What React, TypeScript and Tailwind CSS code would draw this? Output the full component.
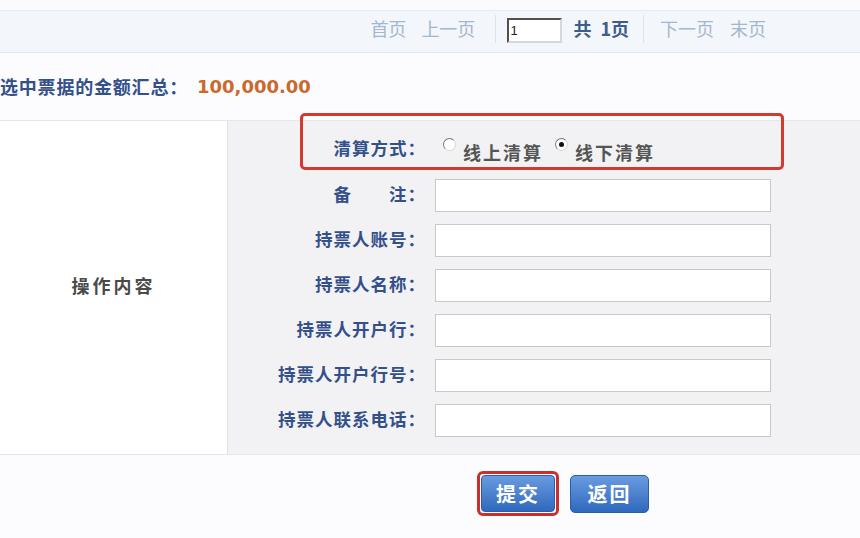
import React from "react";

const font = { fontFamily: '"Noto Sans CJK SC", "Noto Sans", sans-serif' };

const fields = ["备\u3000\u3000注：", "持票人账号：", "持票人名称：", "持票人开户行：", "持票人开户行号：", "持票人联系电话："];

function Radio({ checked }: { checked?: boolean }) {
  return (
    <span className="relative -top-[4px] inline-flex h-[13px] w-[13px] items-center justify-center rounded-full border-[1.5px] border-[#777] border-r-[#d6d6d6] border-b-[#d6d6d6] bg-white">
      {checked && <span className="h-[5px] w-[5px] rounded-full bg-[#111]" />}
    </span>
  );
}

export default function App() {
  return (
    <div className="relative h-[538px] w-[860px] overflow-hidden bg-[#fcfcfe]" style={font}>
      {/* 顶部空白 */}
      <div className="h-[11px] border-b border-[#e7eaef] bg-[#fbfbfd]" />

      {/* 分页栏 */}
      <div className="flex h-[42px] items-center justify-end border-b border-[#e3e7ed] bg-[#f3f6fa] pb-[6px] pr-[94px] text-[18px] text-[#a3b6cf]">
        <span>首页</span>
        <span className="ml-[15px]">上一页</span>
        <span className="ml-[20px] h-[28px] w-px bg-[#dde3ea]" />
        <input
          readOnly
          value="1"
          className="ml-[11px] mt-[4px] h-[25px] w-[55px] border-2 border-b-[#d4d8de] border-l-[#505050] border-r-[#d4d8de] border-t-[#505050] bg-white pl-[1px] text-[13px] text-[#222] outline-none"
          style={{ fontFamily: '"Liberation Sans", sans-serif' }}
        />
        <span className="ml-[11px] font-bold text-[#3f5c8c]">共</span>
        <span className="ml-[9px] font-bold text-[#3f5c8c]">1页</span>
        <span className="ml-[14px] h-[28px] w-px bg-[#dde3ea]" />
        <span className="ml-[16px]">下一页</span>
        <span className="ml-[16px]">末页</span>
      </div>

      {/* 金额汇总 */}
      <div className="flex h-[67px] items-center pb-[1px]">
        <span className="text-[18px] font-bold tracking-[0.8px] text-[#34508a]">选中票据的金额汇总：</span>
        <span
          className="ml-[9px] text-[18px] font-bold text-[#c86a2c]"
          style={{ fontFamily: '"DejaVu Sans", sans-serif' }}
        >
          100,000.00
        </span>
      </div>

      {/* 操作内容表格 */}
      <div className="flex border-y border-[#e6e6ea]">
        <div className="flex w-[228px] items-center justify-center border-r border-[#e2e2e6] bg-white pb-[4px] text-[18px] font-bold tracking-[3px] text-[#4a4a4a]">
          操作内容
        </div>
        <div className="flex-1 bg-[#f2f2f4] pb-[17px]">
          <div className="flex h-[54px] items-center">
            <div className="w-[200px] pr-[2px] text-right text-[17.5px] font-bold tracking-[1px] text-[#34508a]">清算方式：</div>
            <div className="ml-[15px] flex items-center text-[18px] font-bold tracking-[2px] text-[#555]">
              <Radio />
              <span className="ml-[7px] mt-[8px]">线上清算</span>
              <span className="ml-[12px]" />
              <Radio checked />
              <span className="ml-[7px] mt-[8px]">线下清算</span>
            </div>
          </div>
          <div className="mt-[4px] flex flex-col gap-[12px]">
            {fields.map((f) => (
              <div key={f} className="flex items-center">
                <div className="w-[200px] pr-[2px] pb-[3px] text-right text-[17.5px] font-bold tracking-[1px] text-[#34508a] whitespace-nowrap">{f}</div>
                <input
                  readOnly
                  className="ml-[7px] h-[33px] w-[336px] border border-[#c9c9c9] bg-white outline-none"
                />
              </div>
            ))}
          </div>
        </div>
      </div>

      {/* 红框标注 */}
      <div className="absolute left-[300px] top-[113px] h-[57px] w-[484px] rounded-[5px] border-[3px] border-[#d23a2e]" />

      {/* 按钮 */}
      <div className="flex items-center pl-[477px] pt-[16px]">
        <div className="rounded-[6px] border-[3px] border-[#c9302c] p-[1px]">
          <button className="h-[37px] w-[74px] rounded-[4px] border border-[#2a5da8] bg-gradient-to-b from-[#6a9be0] to-[#2f69bd] text-[20px] font-bold tracking-[2px] text-white">
            提交
          </button>
        </div>
        <button className="ml-[11px] h-[38px] w-[79px] rounded-[5px] border border-[#2a5da8] bg-gradient-to-b from-[#6a9be0] to-[#2f69bd] text-[20px] font-bold tracking-[2px] text-white">
          返回
        </button>
      </div>
    </div>
  );
}
